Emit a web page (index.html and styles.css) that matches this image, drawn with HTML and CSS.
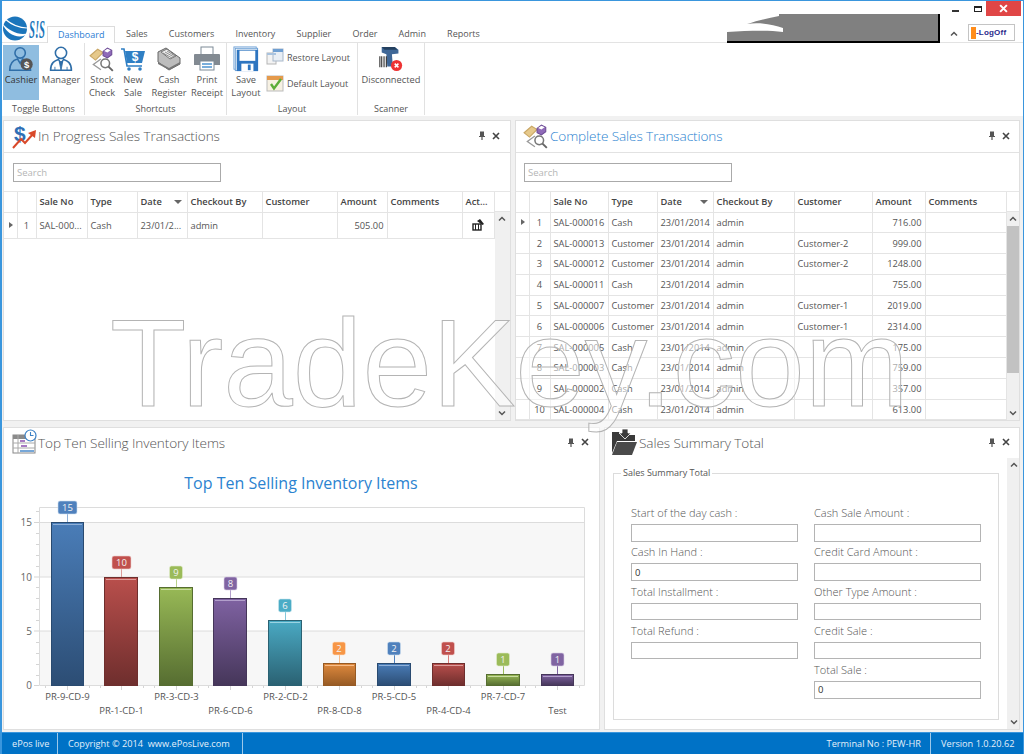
FILE: index.html
```html
<!DOCTYPE html>
<html lang="en">
<head>
<meta charset="utf-8">
<title>ePos live</title>
<link rel="stylesheet" href="styles.css">
</head>
<body>
<svg class="defs" width="0" height="0" aria-hidden="true">
  <defs>
    <symbol id="i-tags" viewBox="0 0 24 24">
      <path d="M1 9 L8 3 L13 6 L6 13 Z" fill="#e6c98b" stroke="#c9a766" stroke-width="1"/>
      <path d="M13 5 L17 2 L21 4 L21 8 L17 11 L13 9 Z" fill="#8f6ab8" stroke="#6d4b96" stroke-width="1"/>
      <path d="M14 4.5 L17 2.5 L20 4 L17 6 Z" fill="#fff"/>
      <path d="M11 12 L4 17 L11 22" fill="none" stroke="#999" stroke-width="1.2"/>
      <circle cx="15" cy="16" r="4" fill="#fff" stroke="#777" stroke-width="1.4"/>
      <path d="M18 19 L22 23" stroke="#666" stroke-width="1.8"/>
    </symbol>
    <symbol id="i-chev-up" viewBox="0 0 8 6"><path d="M1 4.5 L4 1.5 L7 4.5" fill="none" stroke="#555" stroke-width="1.5"/></symbol>
    <symbol id="i-chev-down" viewBox="0 0 8 6"><path d="M1 1.5 L4 4.5 L7 1.5" fill="none" stroke="#555" stroke-width="1.5"/></symbol>
    <symbol id="i-pin" viewBox="0 0 8 9"><path d="M2 0.5 H6 V5 H7 V6 H4.6 V9 H3.4 V6 H1 V5 H2 Z" fill="#555"/></symbol>
    <symbol id="i-x" viewBox="0 0 8 8"><path d="M1 1 L7 7 M7 1 L1 7" stroke="#444" stroke-width="1.6"/></symbol>
    <linearGradient id="gb" x1="0" y1="0" x2="0" y2="1"><stop offset="0" stop-color="#4a7db8"/><stop offset="1" stop-color="#2c4d74"/></linearGradient>
    <linearGradient id="gr" x1="0" y1="0" x2="0" y2="1"><stop offset="0" stop-color="#b94f4c"/><stop offset="1" stop-color="#6e2e2d"/></linearGradient>
    <linearGradient id="gg" x1="0" y1="0" x2="0" y2="1"><stop offset="0" stop-color="#98b956"/><stop offset="1" stop-color="#566d31"/></linearGradient>
    <linearGradient id="gp" x1="0" y1="0" x2="0" y2="1"><stop offset="0" stop-color="#7f62a2"/><stop offset="1" stop-color="#453659"/></linearGradient>
    <linearGradient id="gt" x1="0" y1="0" x2="0" y2="1"><stop offset="0" stop-color="#4aaac4"/><stop offset="1" stop-color="#2a6172"/></linearGradient>
    <linearGradient id="go" x1="0" y1="0" x2="0" y2="1"><stop offset="0" stop-color="#e08a3e"/><stop offset="1" stop-color="#965a24"/></linearGradient>
  </defs>
</svg>

<div class="app">
  <header class="topbar">
    <div class="logo">
      <svg width="45" height="26" viewBox="0 0 45 26">
        <circle cx="13" cy="12.5" r="12" fill="#1b75bb"/>
        <path d="M0 7 C8 16 18 20 27 17 C19 24 5 20 0 7 Z" fill="#fff"/>
        <path d="M3 3 C10 9 17 12 25 12" fill="none" stroke="#fff" stroke-width="1.2"/>
        <text x="27" y="22" class="logo-text" textLength="16" lengthAdjust="spacingAndGlyphs">S!S</text>
      </svg>
    </div>
    <nav class="tabs">
      <span class="tab tab-active">Dashboard</span>
      <span class="tab">Sales</span>
      <span class="tab">Customers</span>
      <span class="tab">Inventory</span>
      <span class="tab">Supplier</span>
      <span class="tab">Order</span>
      <span class="tab">Admin</span>
      <span class="tab">Reports</span>
    </nav>
    <div class="redacted">
      <svg width="58" height="27" viewBox="0 0 58 27"><path d="M0 0 H52 V2 C42 4 32 6 20 10 C34 8 46 11 56 14 V18 C40 16 20 17 0 18 Z" fill="#fff"/></svg>
    </div>
    <div class="top-right">
      <div class="win-controls">
        <span class="win-min"></span>
        <span class="win-max"></span>
        <span class="win-close"><svg width="9" height="9" viewBox="0 0 8 8"><path d="M1 1 L7 7 M7 1 L1 7" stroke="#fff" stroke-width="1.8"/></svg></span>
      </div>
      <div class="logoff-row">
        <svg class="collapse" width="8" height="6"><use href="#i-chev-up"/></svg>
        <div class="logoff"><span class="door"></span><span class="logoff-text">-LogOff</span></div>
      </div>
    </div>
  </header>

  <section class="ribbon">
    <div class="rgroup rg-toggle">
      <div class="rbtns">
        <div class="rbtn rbtn-on w36">
          <svg width="26" height="26" viewBox="0 0 30 30">
            <circle cx="14" cy="8" r="6" fill="none" stroke="#2f6ea8" stroke-width="1.8"/>
            <path d="M2 28 C2 19 7 16 11 15 L14 20 L17 15 C21 16 26 19 26 28 Z" fill="none" stroke="#2f6ea8" stroke-width="1.8"/>
            <circle cx="21.5" cy="21" r="7" fill="#555"/>
            <text x="21.5" y="25" class="coin">$</text>
          </svg>
          <span>Cashier</span>
        </div>
        <div class="rbtn w44">
          <svg width="26" height="26" viewBox="0 0 30 30">
            <circle cx="15" cy="8" r="6.5" fill="none" stroke="#2f6ea8" stroke-width="1.8"/>
            <path d="M3 28 C3 19 8 17 12 15.5 L15 20 L18 15.5 C22 17 27 19 27 28 Z" fill="none" stroke="#2f6ea8" stroke-width="1.8"/>
            <path d="M13 18 L15 28 L17 18 Z M8 24 V28 M22 24 V28" fill="#2f6ea8" stroke="#2f6ea8"/>
          </svg>
          <span>Manager</span>
        </div>
      </div>
      <div class="rlabel">Toggle Buttons</div>
    </div>
    <div class="rgroup rg-short">
      <div class="rbtns">
        <div class="rbtn w34"><svg width="26" height="26"><use href="#i-tags"/></svg><span>Stock<br>Check</span></div>
        <div class="rbtn w28">
          <svg width="26" height="26" viewBox="0 0 26 26">
            <path d="M1 3 H4 L7 20 H22" fill="none" stroke="#2f7fc4" stroke-width="1.6"/>
            <path d="M5 5 H25 L22 17 H7 Z" fill="#2f7fc4"/>
            <circle cx="9" cy="23" r="1.8" fill="#2f7fc4"/><circle cx="20" cy="23" r="1.8" fill="#2f7fc4"/>
            <text x="15" y="15" class="coin-lg">$</text>
          </svg>
          <span>New<br>Sale</span>
        </div>
        <div class="rbtn w44">
          <svg width="28" height="26" viewBox="0 0 28 26">
            <path d="M3 6 L11 2 L25 12 L25 18 L14 24 L3 16 Z" fill="#bdbdbd" stroke="#666"/>
            <path d="M6 6 L12 3 L21 10 L15 13 Z" fill="#eee" stroke="#777"/>
            <path d="M8 7 L17 12 M10 6 L19 11 M12 5 L20 10" stroke="#777" stroke-width=".8"/>
            <path d="M3 16 L14 22 L25 16 L25 18 L14 24 L3 18 Z" fill="#777"/>
          </svg>
          <span>Cash<br>Register</span>
        </div>
        <div class="rbtn w32">
          <svg width="28" height="26" viewBox="0 0 28 26">
            <rect x="8" y="1" width="12" height="8" fill="#fff" stroke="#7d8a96"/>
            <path d="M2 8 H26 A1 1 0 0 1 27 9 V19 H1 V9 A1 1 0 0 1 2 8 Z" fill="#828a92"/>
            <rect x="7" y="15" width="14" height="9" fill="#fff" stroke="#7d8a96"/>
            <path d="M9 18 H19 M9 21 H19" stroke="#4f94cf" stroke-width="1.4"/>
          </svg>
          <span>Print<br>Receipt</span>
        </div>
      </div>
      <div class="rlabel">Shortcuts</div>
    </div>
    <div class="rgroup rg-layout">
      <div class="rbtns">
        <div class="rbtn w36">
          <svg width="26" height="26" viewBox="0 0 28 28">
            <rect x="1" y="1" width="24" height="24" fill="#fff" stroke="#6ea1d6"/>
            <rect x="2.5" y="2.5" width="24" height="24" fill="#fff" stroke="#6ea1d6"/>
            <path d="M4 4 H27 V27 H4 Z" fill="#2e75c0"/>
            <rect x="7" y="5" width="17" height="11" fill="#fff"/>
            <rect x="9" y="19" width="13" height="8" fill="#fff"/>
            <rect x="16" y="20" width="3" height="6" fill="#2e75c0"/>
          </svg>
          <span>Save<br>Layout</span>
        </div>
        <div class="rcol">
          <div class="rsmall">
            <svg width="18" height="18" viewBox="0 0 18 18">
              <rect x="1" y="5" width="9" height="11" fill="#f3f3f3" stroke="#b5b5b5"/>
              <rect x="7" y="1" width="10" height="12" fill="#e8eef5" stroke="#a9b8c9"/>
              <rect x="7" y="1" width="10" height="3" fill="#6f9fd2"/>
              <rect x="1" y="5" width="9" height="2" fill="#a9c3df"/>
            </svg>
            <span>Restore Layout</span>
          </div>
          <div class="rsmall">
            <svg width="18" height="18" viewBox="0 0 18 18">
              <rect x="1" y="2" width="16" height="15" fill="#f7f1e3" stroke="#bbb"/>
              <rect x="1" y="2" width="16" height="4" fill="#e59a4c"/>
              <path d="M5 10 L8 14.5 L15 5" fill="none" stroke="#5dae3a" stroke-width="2.4"/>
            </svg>
            <span>Default Layout</span>
          </div>
        </div>
      </div>
      <div class="rlabel">Layout</div>
    </div>
    <div class="rgroup rg-scan">
      <div class="rbtns">
        <div class="rbtn w66">
          <svg width="26" height="26" viewBox="0 0 28 28">
            <path d="M4 1 H18 L22 4 V8 L15 9 L16 22 H10 L9 9 L4 7 Z" fill="#3f6797"/>
            <path d="M4 1 H18 L21 4 H7 Z" fill="#24405f"/>
            <path d="M2 11 V23 M4 11 V23 M6.5 11 V23 M9 11 V23" stroke="#333" stroke-width="1.2"/>
            <circle cx="20" cy="21" r="6" fill="#e33"/>
            <path d="M18 19 L22 23 M22 19 L18 23" stroke="#fff" stroke-width="1.6"/>
          </svg>
          <span>Disconnected</span>
        </div>
      </div>
      <div class="rlabel">Scanner</div>
    </div>
  </section>

  <main class="workspace">
    <div class="row row-top">
      <section class="panel panel-progress">
        <header class="panel-head">
          <svg class="panel-icon" width="25" height="26" viewBox="0 0 25 26">
            <text x="2" y="18" class="dollar">$</text>
            <path d="M1 25 L9 16 L13 20 L21 11" fill="none" stroke="#d9492a" stroke-width="2"/>
            <path d="M16 10 L24 7 L23 15 Z" fill="#d9492a"/>
          </svg>
          <h2 class="panel-title">In Progress Sales Transactions</h2>
          <span class="panel-actions"><svg width="8" height="9"><use href="#i-pin"/></svg><svg width="8" height="8"><use href="#i-x"/></svg></span>
        </header>
        <div class="searchbar"><input class="search" placeholder="Search"></div>
        <div class="grid-wrap">
          <table class="grid grid-progress">
            <colgroup><col class="c13"><col class="c19"><col class="c51"><col class="c50"><col class="c50"><col class="c75"><col class="c75"><col class="c50"><col class="c75"><col class="c32"></colgroup>
            <thead><tr><th></th><th></th><th>Sale No</th><th>Type</th><th class="sorted">Date<i class="sort"></i></th><th>Checkout By</th><th>Customer</th><th>Amount</th><th>Comments</th><th>Act...</th></tr></thead>
            <tbody>
              <tr><td class="ind"><i class="arrow"></i></td><td class="num">1</td><td>SAL-000...</td><td>Cash</td><td>23/01/2...</td><td>admin</td><td></td><td class="amt">505.00</td><td></td><td class="act">
                <svg width="13" height="13" viewBox="0 0 13 13"><rect x="1" y="6" width="8" height="6" fill="#fff" stroke="#222" stroke-width="1.4"/><path d="M3.5 6 V12 M6.5 6 V12" stroke="#222"/><path d="M5 3 L8 1 L12 6 L10.5 7 Z" fill="#222"/></svg>
              </td></tr>
            </tbody>
          </table>
          <div class="vscroll">
            <div class="vs-cap"></div>
            <div class="vs-track">
              <svg class="vs-arrow" width="8" height="6"><use href="#i-chev-up"/></svg>
              <svg class="vs-arrow vs-bottom" width="8" height="6"><use href="#i-chev-down"/></svg>
            </div>
          </div>
        </div>
      </section>

      <section class="panel panel-complete">
        <header class="panel-head">
          <svg class="panel-icon" width="26" height="26"><use href="#i-tags"/></svg>
          <h2 class="panel-title title-blue">Complete Sales Transactions</h2>
          <span class="panel-actions"><svg width="8" height="9"><use href="#i-pin"/></svg><svg width="8" height="8"><use href="#i-x"/></svg></span>
        </header>
        <div class="searchbar"><input class="search" placeholder="Search"></div>
        <div class="grid-wrap">
          <table class="grid grid-complete">
            <colgroup><col class="c13"><col class="c21"><col class="c58"><col class="c49"><col class="c56"><col class="c81"><col class="c78"><col class="c53"><col class="c81"></colgroup>
            <thead><tr><th></th><th></th><th>Sale No</th><th>Type</th><th class="sorted">Date<i class="sort"></i></th><th>Checkout By</th><th>Customer</th><th>Amount</th><th>Comments</th></tr></thead>
            <tbody>
              <tr class="focus"><td class="ind"><i class="arrow"></i></td><td class="num">1</td><td>SAL-000016</td><td>Cash</td><td>23/01/2014</td><td>admin</td><td></td><td class="amt">716.00</td><td></td></tr>
              <tr><td class="ind"></td><td class="num">2</td><td>SAL-000013</td><td>Customer</td><td>23/01/2014</td><td>admin</td><td>Customer-2</td><td class="amt">999.00</td><td></td></tr>
              <tr><td class="ind"></td><td class="num">3</td><td>SAL-000012</td><td>Customer</td><td>23/01/2014</td><td>admin</td><td>Customer-2</td><td class="amt">1248.00</td><td></td></tr>
              <tr><td class="ind"></td><td class="num">4</td><td>SAL-000011</td><td>Cash</td><td>23/01/2014</td><td>admin</td><td></td><td class="amt">755.00</td><td></td></tr>
              <tr><td class="ind"></td><td class="num">5</td><td>SAL-000007</td><td>Customer</td><td>23/01/2014</td><td>admin</td><td>Customer-1</td><td class="amt">2019.00</td><td></td></tr>
              <tr><td class="ind"></td><td class="num">6</td><td>SAL-000006</td><td>Customer</td><td>23/01/2014</td><td>admin</td><td>Customer-1</td><td class="amt">2314.00</td><td></td></tr>
              <tr><td class="ind"></td><td class="num">7</td><td>SAL-000005</td><td>Cash</td><td>23/01/2014</td><td>admin</td><td></td><td class="amt">175.00</td><td></td></tr>
              <tr><td class="ind"></td><td class="num">8</td><td>SAL-000003</td><td>Cash</td><td>23/01/2014</td><td>admin</td><td></td><td class="amt">759.00</td><td></td></tr>
              <tr><td class="ind"></td><td class="num">9</td><td>SAL-000002</td><td>Cash</td><td>23/01/2014</td><td>admin</td><td></td><td class="amt">357.00</td><td></td></tr>
              <tr><td class="ind"></td><td class="num">10</td><td>SAL-000004</td><td>Cash</td><td>23/01/2014</td><td>admin</td><td></td><td class="amt">613.00</td><td></td></tr>
            </tbody>
          </table>
          <div class="vscroll">
            <div class="vs-cap"></div>
            <div class="vs-track">
              <svg class="vs-arrow" width="8" height="6"><use href="#i-chev-up"/></svg>
              <div class="vs-thumb"></div>
              <svg class="vs-arrow vs-bottom" width="8" height="6"><use href="#i-chev-down"/></svg>
            </div>
          </div>
        </div>
      </section>
    </div>

    <div class="row row-bottom">
      <section class="panel panel-chart">
        <header class="panel-head head-plain">
          <svg class="panel-icon" width="25" height="26" viewBox="0 0 25 26">
            <rect x="1" y="6" width="22" height="18" fill="#fff" stroke="#888"/>
            <rect x="1" y="6" width="22" height="4" fill="#8a8a8a"/>
            <path d="M1 14 H23 M1 19 H23 M6 6 V24" stroke="#aaa"/>
            <path d="M8 12 H13 M9 17 H15" stroke="#8a4fb0" stroke-width="1.4"/>
            <path d="M8 22 H22" stroke="#3d82c6" stroke-width="1.4"/>
            <circle cx="18.5" cy="6.5" r="5.5" fill="#fff" stroke="#3d82c6" stroke-width="1.2"/>
            <path d="M18.5 3 V6.5 H21.5" fill="none" stroke="#3d82c6" stroke-width="1.1"/>
          </svg>
          <h2 class="panel-title">Top Ten Selling Inventory Items</h2>
          <span class="panel-actions"><svg width="8" height="9"><use href="#i-pin"/></svg><svg width="8" height="8"><use href="#i-x"/></svg></span>
        </header>
        <svg class="chart" width="595" height="271" viewBox="4 458 595 271">
          <text x="301" y="489" class="chart-title">Top Ten Selling Inventory Items</text>
          <rect x="39.5" y="522.5" width="545" height="54.5" fill="#f7f7f7"/>
          <rect x="39.5" y="631" width="545" height="54" fill="#f7f7f7"/>
          <path d="M39.5 507.5 H584.5 V685.5 H39.5 Z M39.5 522.5 H584.5 M39.5 577 H584.5 M39.5 631 H584.5" fill="none" stroke="#dcdcdc"/>
          <path d="M34 522.5 H39 M34 577 H39 M34 631 H39 M34 685.5 H39 M36 511.5 H39 M36 533.5 H39 M36 544.5 H39 M36 555.5 H39 M36 566.5 H39 M36 587.5 H39 M36 598.5 H39 M36 609.5 H39 M36 620.5 H39 M36 642.5 H39 M36 653.5 H39 M36 664.5 H39 M36 675.5 H39" stroke="#d5d5d5"/>
          <path d="M67.5 686 V690 M121.5 686 V690 M176.5 686 V690 M230.5 686 V690 M285.5 686 V690 M339.5 686 V690 M394.5 686 V690 M448.5 686 V690 M503.5 686 V690 M557.5 686 V690 M45.5 686 V688 M89.5 686 V688 M100.5 686 V688 M143.5 686 V688 M154.5 686 V688 M198.5 686 V688 M208.5 686 V688 M252.5 686 V688 M263.5 686 V688 M307.5 686 V688 M317.5 686 V688 M361.5 686 V688 M372.5 686 V688 M416.5 686 V688 M426.5 686 V688 M470.5 686 V688 M481.5 686 V688 M525.5 686 V688 M535.5 686 V688 M579.5 686 V688" stroke="#d5d5d5"/>
          <text x="32" y="526" class="yl">15</text><text x="32" y="581" class="yl">10</text><text x="32" y="635" class="yl">5</text><text x="32" y="689" class="yl">0</text>

          <g class="bar">
            <path d="M67.5 508 V522" stroke="#8fb0d8"/>
            <rect x="51.5" y="522.5" width="32" height="163" fill="url(#gb)" stroke="#294a70"/>
            <path d="M53 524.5 H82" stroke="#8fb0d8"/>
            <rect x="58" y="501" width="19" height="13" rx="2" fill="#4f81bd" stroke="#cfdff0" stroke-width=".6"/>
            <text x="67.5" y="511" class="vl">15</text>
          </g>
          <g class="bar">
            <path d="M121.5 563 V577" stroke="#dc9c9a"/>
            <rect x="104.5" y="577.5" width="33" height="108" fill="url(#gr)" stroke="#6e2e2d"/>
            <path d="M106 579.5 H136" stroke="#dc9c9a"/>
            <rect x="112" y="556" width="19" height="13" rx="2" fill="#c0504d" stroke="#f0d0cf" stroke-width=".6"/>
            <text x="121.5" y="566" class="vl">10</text>
          </g>
          <g class="bar">
            <path d="M176.5 573 V587" stroke="#b9d28a"/>
            <rect x="159.5" y="587.5" width="33" height="98" fill="url(#gg)" stroke="#566d31"/>
            <path d="M161 589.5 H191" stroke="#c9dca0"/>
            <rect x="169.5" y="566" width="13" height="13" rx="2" fill="#9bbb59" stroke="#e3edcf" stroke-width=".6"/>
            <text x="176" y="576" class="vl">9</text>
          </g>
          <g class="bar">
            <path d="M230.5 584 V598" stroke="#b29fcb"/>
            <rect x="213.5" y="598.5" width="33" height="87" fill="url(#gp)" stroke="#453659"/>
            <path d="M215 600.5 H245" stroke="#b29fcb"/>
            <rect x="224" y="577" width="13" height="13" rx="2" fill="#8064a2" stroke="#d9cfe5" stroke-width=".6"/>
            <text x="230.5" y="587" class="vl">8</text>
          </g>
          <g class="bar">
            <path d="M285.5 606 V620" stroke="#84c7da"/>
            <rect x="268.5" y="620.5" width="33" height="65" fill="url(#gt)" stroke="#2a6172"/>
            <path d="M270 622.5 H300" stroke="#9ad3e2"/>
            <rect x="278.5" y="599" width="13" height="13" rx="2" fill="#4bacc6" stroke="#cbe7ef" stroke-width=".6"/>
            <text x="285" y="609" class="vl">6</text>
          </g>
          <g class="bar">
            <path d="M339.5 649 V663" stroke="#f7bd8a"/>
            <rect x="323.5" y="663.5" width="32" height="22" fill="url(#go)" stroke="#965a24"/>
            <path d="M325 665.5 H354" stroke="#f7bd8a"/>
            <rect x="332.5" y="642" width="13" height="13" rx="2" fill="#f79646" stroke="#fde3cc" stroke-width=".6"/>
            <text x="339" y="652" class="vl">2</text>
          </g>
          <g class="bar">
            <path d="M394.5 649 V663" stroke="#4f81bd"/>
            <rect x="377.5" y="663.5" width="33" height="22" fill="url(#gb)" stroke="#294a70"/>
            <path d="M379 665.5 H409" stroke="#8fb0d8"/>
            <rect x="387.5" y="642" width="13" height="13" rx="2" fill="#4f81bd" stroke="#cfdff0" stroke-width=".6"/>
            <text x="394" y="652" class="vl">2</text>
          </g>
          <g class="bar">
            <path d="M448.5 649 V663" stroke="#dc7c7a"/>
            <rect x="432.5" y="663.5" width="32" height="22" fill="url(#gr)" stroke="#6e2e2d"/>
            <path d="M434 665.5 H463" stroke="#dc9c9a"/>
            <rect x="441.5" y="642" width="13" height="13" rx="2" fill="#c0504d" stroke="#f0d0cf" stroke-width=".6"/>
            <text x="448" y="652" class="vl">2</text>
          </g>
          <g class="bar">
            <path d="M503.5 660 V674" stroke="#9bbb59"/>
            <rect x="486.5" y="674.5" width="33" height="11" fill="url(#gg)" stroke="#566d31"/>
            <path d="M488 676.5 H518" stroke="#c9dca0"/>
            <rect x="496.5" y="653" width="13" height="13" rx="2" fill="#9bbb59" stroke="#e3edcf" stroke-width=".6"/>
            <text x="503" y="663" class="vl">1</text>
          </g>
          <g class="bar">
            <path d="M557.5 660 V674" stroke="#8064a2"/>
            <rect x="541.5" y="674.5" width="32" height="11" fill="url(#gp)" stroke="#453659"/>
            <path d="M543 676.5 H572" stroke="#b29fcb"/>
            <rect x="551" y="653" width="13" height="13" rx="2" fill="#8064a2" stroke="#d9cfe5" stroke-width=".6"/>
            <text x="557.5" y="663" class="vl">1</text>
          </g>

          <text x="67.5" y="700" class="xl">PR-9-CD-9</text>
          <text x="121.5" y="714" class="xl">PR-1-CD-1</text>
          <text x="176.5" y="700" class="xl">PR-3-CD-3</text>
          <text x="230.5" y="714" class="xl">PR-6-CD-6</text>
          <text x="285.5" y="700" class="xl">PR-2-CD-2</text>
          <text x="339.5" y="714" class="xl">PR-8-CD-8</text>
          <text x="394" y="700" class="xl">PR-5-CD-5</text>
          <text x="448.5" y="714" class="xl">PR-4-CD-4</text>
          <text x="503" y="700" class="xl">PR-7-CD-7</text>
          <text x="557.5" y="714" class="xl">Test</text>
        </svg>
      </section>

      <section class="panel panel-summary">
        <header class="panel-head head-plain">
          <svg class="panel-icon" width="27" height="27" viewBox="0 0 27 27">
            <path d="M1 3 H8 L10 6 H24 V12 H6 L1 24 Z" fill="#3a3a3a"/>
            <path d="M6 13 H26 L21 26 H1 Z" fill="#4a4a4a"/>
            <path d="M11 0 H17 V4 H20 L14 10 L8 4 H11 Z" fill="#3a3a3a" stroke="#fff" stroke-width=".8"/>
          </svg>
          <h2 class="panel-title">Sales Summary Total</h2>
          <span class="panel-actions"><svg width="8" height="9"><use href="#i-pin"/></svg><svg width="8" height="8"><use href="#i-x"/></svg></span>
        </header>
        <div class="summary-body">
          <fieldset class="summary">
            <legend>Sales Summary Total</legend>
            <div class="summary-cols">
              <div class="summary-col">
                <label class="field"><span>Start of the day cash :</span><input></label>
                <label class="field"><span>Cash In Hand :</span><input value="0"></label>
                <label class="field"><span>Total Installment :</span><input></label>
                <label class="field"><span>Total Refund :</span><input></label>
              </div>
              <div class="summary-col">
                <label class="field"><span>Cash Sale Amount :</span><input></label>
                <label class="field"><span>Credit Card Amount :</span><input></label>
                <label class="field"><span>Other Type Amount :</span><input></label>
                <label class="field"><span>Credit Sale :</span><input></label>
                <label class="field"><span>Total Sale :</span><input value="0"></label>
              </div>
            </div>
          </fieldset>
          <div class="vs-track vs-summary">
            <svg class="vs-arrow" width="8" height="6"><use href="#i-chev-up"/></svg>
            <svg class="vs-arrow vs-bottom" width="8" height="6"><use href="#i-chev-down"/></svg>
          </div>
        </div>
      </section>
    </div>
  </main>

  <footer class="statusbar">
    <span class="st st-name">ePos live</span>
    <span class="st st-copy">Copyright © 2014&nbsp; www.ePosLive.com</span>
    <span class="st-fill"></span>
    <span class="st st-term">Terminal No : PEW-HR</span>
    <span class="st st-ver">Version 1.0.20.62</span>
  </footer>

  <div class="watermark">TradeKey.com</div>
</div>
</body>
</html>
```

FILE: styles.css
```css
* { box-sizing: border-box; }
html, body { margin: 0; padding: 0; }
body { width: 1024px; height: 754px; overflow: hidden; background: #fff; font-family: "Open Sans", "Liberation Sans", sans-serif; font-size: 10px; color: #555; }
.defs { position: absolute; }

.app { position: relative; width: 1024px; height: 754px; display: flex; flex-direction: column; border-top: 1px solid #3a96dd; border-left: 2px solid #3a96dd; border-right: 1px solid #3a96dd; background: #f1f1f1; overflow: hidden; }

/* top bar */
.topbar { height: 42px; flex: none; display: flex; background: #fff; border-bottom: 1px solid #e3e3e3; }
.logo { width: 45px; flex: none; padding-top: 15px; }
.logo-text { font: italic 700 25px "Liberation Serif", serif; fill: #1b75bb; }
.tabs { display: flex; align-items: flex-end; flex: none; width: 680px; height: 42px; }
.tab { height: 17px; line-height: 15px; padding: 0 10.6px; font-size: 9px; color: #555; white-space: nowrap; }
.tab-active { color: #2b7cd3; background: #fff; border: 1px solid #dcdcdc; border-bottom: 1px solid #fff; margin-bottom: -1px; height: 18px; padding: 0 10px; }
.redacted { margin-top: 13px; width: 213px; height: 29px; flex: none; background: #808080; border-right: 2px solid #000; border-bottom: 2px solid #000; overflow: hidden; }
.redacted svg { display: block; }
.top-right { flex: 1; display: flex; flex-direction: column; }
.win-controls { display: flex; height: 15px; justify-content: flex-end; padding-right: 2px; }
.win-min { width: 7px; height: 2px; background: #333; margin: 9px 0 0 0; }
.win-max { width: 8px; height: 6px; border: 1px solid #222; border-top-width: 2px; margin: 5px 0 0 15px; }
.win-close { width: 35px; height: 15px; background: #e04646; margin-left: 4px; display: flex; align-items: center; justify-content: center; }
.logoff-row { display: flex; align-items: center; margin-top: 8px; }
.collapse { margin: 2px 0 0 10px; flex: none; }
.logoff { margin-left: 10px; width: 47px; height: 17px; border: 1px solid #c4c4c4; display: flex; align-items: center; padding-left: 2px; flex: none; }
.door { width: 5px; height: 12px; background: #ff8c1a; flex: none; }
.logoff-text { font: 700 8px "Liberation Sans", sans-serif; color: #2a2a8c; letter-spacing: .2px; }

/* ribbon */
.ribbon { height: 73px; flex: none; display: flex; background: #fff; padding-left: 1px; }
.rgroup { display: flex; flex-direction: column; border-right: 1px solid #e1e1e1; margin-bottom: 1px; }
.rg-toggle { width: 82px; }
.rg-short { width: 142px; }
.rg-layout { width: 131px; }
.rg-scan { width: 67px; }
.rbtns { height: 60px; display: flex; padding-top: 2px; }
.rlabel { text-align: center; font-size: 9px; line-height: 12px; color: #555; padding-top: 1px; }
.rbtn { display: flex; flex-direction: column; align-items: center; text-align: center; font-size: 9.3px; line-height: 13px; color: #555; flex: none; }
.rbtn svg { flex: none; margin: 1px 0 1px; }
.rbtn-on { background: #8fbde0; color: #333; align-self: flex-start; height: 55px; }
.w28 { width: 28px; } .w32 { width: 32px; } .w34 { width: 34px; } .w36 { width: 36px; } .w44 { width: 44px; } .w66 { width: 66px; }
.rg-layout .rbtns { padding-left: 1px; }
.coin { font: 700 11px "Liberation Sans", sans-serif; fill: #fff; text-anchor: middle; }
.coin-lg { font: 700 12px "Liberation Sans", sans-serif; fill: #fff; text-anchor: middle; }
.rcol { display: flex; flex-direction: column; gap: 8px; padding: 3px 0 0 2px; }
.rsmall { display: flex; align-items: center; gap: 3px; height: 18px; font-size: 9px; color: #555; white-space: nowrap; }

/* workspace */
.workspace { flex: 1; display: flex; flex-direction: column; gap: 6px; padding: 4px 3px 2px 1px; min-height: 0; }
.row { display: flex; flex: none; gap: 4px; }
.row-top { height: 301px; }
.row-bottom { height: 303px; }
.panel { background: #fff; border: 1px solid #dfdfdf; display: flex; flex-direction: column; overflow: hidden; min-width: 0; }
.panel-progress { width: 508px; }
.panel-complete { width: 505px; }
.panel-chart { width: 597px; }
.panel-summary { width: 416px; }
.panel-head { height: 32px; flex: none; display: flex; align-items: center; border-bottom: 1px solid #e2e2e2; padding: 0 9px 2px 8px; }
.panel-progress .panel-head, .panel-chart .panel-head { padding-right: 10px; }
.panel-complete .panel-head { padding-left: 7px; }
.panel-summary .panel-head { padding-left: 6px; }
.head-plain { border-bottom: 0; height: 30px; }
.panel-icon { flex: none; margin-right: 1px; }
.panel-title { margin: 0; flex: 1; font-size: 13.6px; font-weight: 300; color: #555; white-space: nowrap; letter-spacing: -.1px; }
.title-blue { color: #2b83d0; }
.panel-actions { display: flex; gap: 6px; align-items: center; }

.searchbar { height: 39px; flex: none; padding: 10px 0 0 9px; border-bottom: 1px solid #e6e6e6; }
.panel-complete .searchbar { padding-left: 8px; }
.search { display: block; width: 208px; height: 19px; border: 1px solid #aaa; padding: 0 3px; font: 9.5px "Open Sans", sans-serif; color: #555; background: #fff; outline: 0; }
.search::placeholder { color: #b5b5b5; opacity: 1; }

/* grids */
.grid-wrap { flex: 1; display: flex; min-height: 0; overflow: hidden; }
.grid { border-collapse: collapse; table-layout: fixed; flex: none; align-self: flex-start; font-size: 9.3px; color: #555; }
.grid-progress { width: 490px; }
.grid-complete { width: 489px; }
.c13 { width: 13px; } .c19 { width: 19px; } .c21 { width: 21px; } .c32 { width: 32px; } .c49 { width: 49px; } .c50 { width: 50px; } .c51 { width: 51px; } .c53 { width: 53px; } .c56 { width: 56px; } .c58 { width: 58px; } .c75 { width: 75px; } .c78 { width: 78px; } .c81 { width: 81px; }
.grid th, .grid td { border: 1px solid #e4e4e4; padding: 0 3px; white-space: nowrap; overflow: hidden; text-align: left; }
.grid tr > :first-child { border-left: 0; }
.grid th { height: 20px; font-weight: 600; color: #444; position: relative; }
.grid thead th { border-top: 0; }
.grid td { height: 20.8px; }
.grid-progress td { height: 26px; }
.grid .num { text-align: center; padding: 0; }
.grid .amt { text-align: right; }
.grid .act { text-align: center; padding: 2px 0 0; }
.grid .ind { padding: 0 0 0 5px; }
.arrow { display: block; width: 0; height: 0; border-left: 4px solid #666; border-top: 3px solid transparent; border-bottom: 3px solid transparent; }
.sort { position: absolute; right: 5px; top: 8px; width: 0; height: 0; border-top: 4px solid #666; border-left: 4px solid transparent; border-right: 4px solid transparent; }
.focus td { border-top: 1px dotted #777; border-bottom: 1px dotted #777; }

.vscroll { flex: 1; display: flex; flex-direction: column; min-width: 0; }
.vs-cap { height: 20px; flex: none; border-bottom: 1px solid #e4e4e4; }
.vs-track { flex: 1; background: #f0f0f0; display: flex; flex-direction: column; align-items: center; padding: 4px 0; }
.vs-arrow { flex: none; }
.vs-bottom { margin-top: auto; }
.vs-thumb { width: 100%; height: 147px; background: #c2c2c2; margin-top: 4px; flex: none; }

/* chart */
.chart { display: block; flex: none; }
.chart-title { font-size: 16px; fill: #2b83d0; text-anchor: middle; }
.yl { font-size: 10px; fill: #666; text-anchor: end; }
.vl { font-size: 9.5px; fill: #f2f2f2; text-anchor: middle; }
.xl { font-size: 9.5px; fill: #555; text-anchor: middle; }
.dollar { font: 700 21px "Liberation Sans", sans-serif; fill: #2f6fb5; }

/* summary */
.summary-body { flex: 1; display: flex; min-height: 0; }
.summary { flex: none; width: 386px; height: 253px; margin: 9px 0 0 8px; padding: 24px 0 0; border: 1px solid #dcdcdc; min-width: 0; }
.summary legend { padding: 0 2px; margin-left: 7px; font-size: 9px; line-height: 12px; color: #555; }
.summary-cols { display: flex; gap: 16px; padding-left: 17px; }
.summary-col { width: 167px; display: flex; flex-direction: column; }
.field { display: block; height: 39.25px; }
.field span { display: block; height: 21px; line-height: 19px; font-size: 11px; font-weight: 300; color: #555; white-space: nowrap; }
.field input { display: block; width: 167px; height: 17.5px; border: 1px solid #b4b4b4; padding: 0 3px; font: 9.5px "Open Sans", sans-serif; color: #333; background: #fff; outline: 0; }
.vs-summary { flex: none; width: 13px; margin-left: 8px; }

/* status */
.statusbar { height: 22px; flex: none; margin: 0 -1px 0 -2px; display: flex; align-items: center; background: #0072c6; border-top: 1px solid #3a96dd; color: #e4f0fa; font-size: 9.2px; white-space: nowrap; }
.st { display: flex; align-items: center; height: 22px; }
.st-name { width: 58px; padding-left: 12px; border-right: 1px solid #9cc8ea; }
.st-copy { width: 185px; padding-left: 10px; border-right: 1px solid #9cc8ea; }
.st-fill { flex: 1; }
.st-term { padding-right: 9px; border-right: 1px solid #9cc8ea; }
.st-ver { width: 93px; padding-left: 10px; }

/* watermark overlay */
.watermark { position: absolute; left: 108px; top: 299px; font: 400 125px/1 "Liberation Sans", sans-serif; color: rgba(255,255,255,.5); -webkit-text-stroke: 1px #b4b4b4; white-space: nowrap; pointer-events: none; }
```
